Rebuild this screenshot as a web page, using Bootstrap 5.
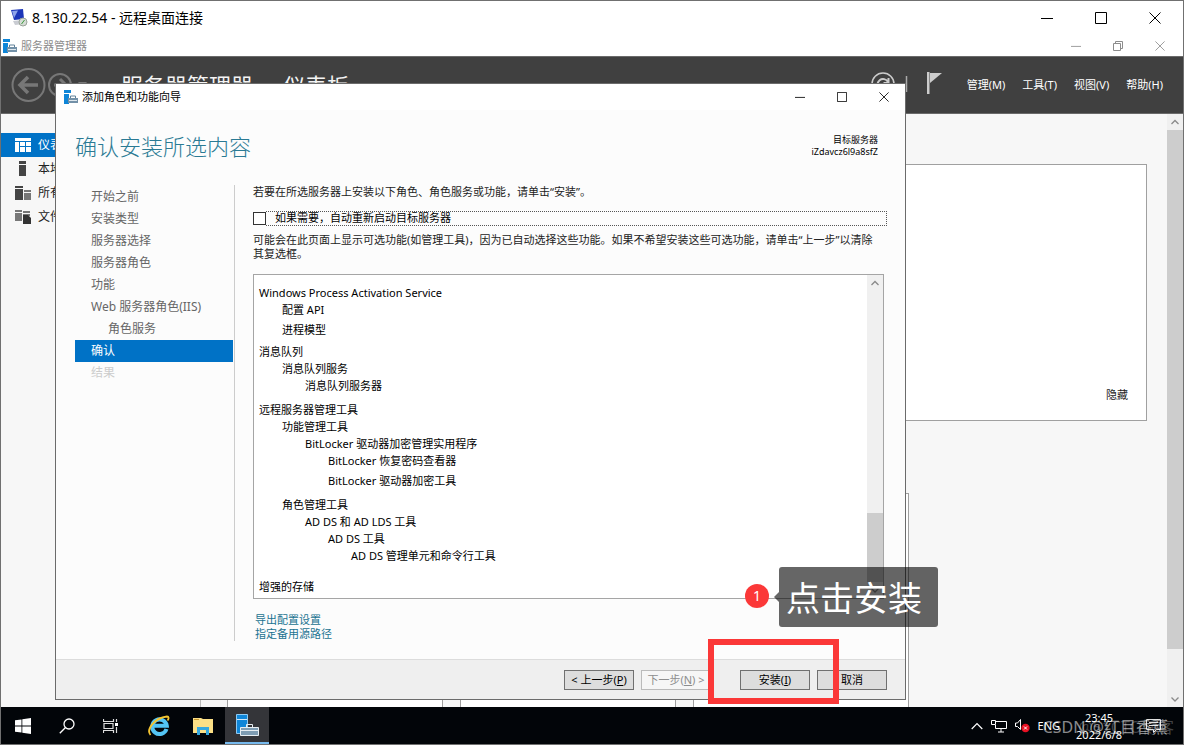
<!DOCTYPE html>
<html lang="zh-CN">
<head>
<meta charset="utf-8">
<meta name="viewport" content="width=device-width, initial-scale=1">
<title>8.130.22.54 - 远程桌面连接</title>
<link href="https://cdn.jsdelivr.net/npm/bootstrap@5.3.0/dist/css/bootstrap.min.css" rel="stylesheet">
<style>
body{font:11px/14px "Noto Sans","Noto Sans CJK SC",sans-serif;color:#222;background:#fff}
svg{display:block;flex:none}
button{font:inherit;color:inherit}
.ui-btn-plain{border:0;background:none;padding:0}
.shell{height:100vh;min-height:600px;border:1px solid #707070;overflow:hidden}
.rdp-bar{height:34px;padding:0 22px 0 9px;font-size:14px;color:#000}
.app-bar{height:21px;padding:0 18px 0 2px;color:#8c8c8c}
.win-btns{gap:32px}
.rdp-bar .win-btns{gap:42px}
.app-head{height:58px;background:#404040;border-top:1px solid #6a6a6a;border-bottom:1px solid #6a6a6a;color:#f4f4f4;padding:0 20px 0 10px}
.app-menu{gap:17px}
.app-title{font-size:22px;line-height:30px;margin-left:32px}
.side-list{width:200px;padding-top:19px;background:#f7f7f7;font-size:12px;border-right:1px solid #bbb}
.side-item{height:24px;padding-left:14px;gap:7px;color:#222;text-decoration:none}
.side-item.on{background:#0072c6;color:#fff}
.dash{background:#f7f7f7;padding:50px 20px 0 26px}
.tile-top{height:257px;background:#fff;border:1px solid #a0a0a0;padding:0 18px 18px}
.tile-row{gap:17px;margin-top:72px}
.tile{width:216px;background:#fff;border:1px solid #a0a0a0;border-bottom:0}
.sbar{width:16px;background:#f0f0f0}
.sbar-end{height:16px}
.sbar-thumb{background:#cdcdcd}
.wizard{left:54px;right:277px;top:82px;bottom:44px;background:#fcfcfc;border:1px solid #6b6b6b}
.wiz-bar{height:26px;background:#fff;padding:0 16px 0 8px;color:#000}
.wiz-head{height:75px;padding:0 27px 4px 19px}
.wiz-title{font-size:22px;line-height:30px;color:#2a7a94;font-weight:300;font-family:"Noto Sans","Noto Sans CJK SC Light","Noto Sans CJK SC",sans-serif}
.wiz-target{font-size:9px;line-height:12px;color:#000}
.wiz-body{padding:0 18px 18px 19px;min-height:0}
.wiz-nav{width:160px;padding:1px 1px 0 0;border-right:1px solid #ccc;font-size:12px}
.wiz-nav a{display:block;height:22px;line-height:22px;padding-left:16px;color:#666;text-decoration:none}
.wiz-nav a.sub{padding-left:33px}
.wiz-nav a.on{background:#0072c6;color:#fff}
.wiz-nav a.off{color:#ccc}
.wiz-main{padding-left:18px;min-width:0;min-height:0}
.wiz-main p{padding-right:6px}
.restart{margin:12px 0 7px}
.restart input{appearance:none;width:13px;height:13px;margin:0;border:1px solid #333;background:#fff;flex:none;border-radius:0}
.restart label{border:1px dotted #555;border-left:0;height:15px;line-height:12px;padding-left:9px;color:#000}
.feature-box{margin:13px 3px 14px 0;border:1px solid #a5a5a5;background:#fff;min-height:0;overflow:hidden}
.tree{padding:9px 0 0 5px;line-height:17px;color:#000}
.tree,.tree ul{list-style:none;margin:0}
.tree ul{padding:0 0 0 23px}
.tree li{padding-bottom:3px}
.tree li.group{padding-bottom:2px}
.tree ul ul ul ul{padding-bottom:3px}
.src-links{padding-left:2px}
.src-links a{color:#1a7391;text-decoration:none;display:block}
.wiz-foot{height:40px;background:#efefef;border-top:1px solid #dcdcdc;padding-right:18px;gap:7px}
.wbtn{width:70px;height:20px;border:1px solid #707070;background:#ddd;color:#000;padding:0;line-height:16px;white-space:nowrap}
.wbtn:disabled{border-color:#bbb;background:#f6f6f6;color:#8d8d8d}
.wbtn.gap-before{margin-left:22px}
.taskbar{height:37px;background:#020509;color:#fff;padding-right:22px}
.task{width:44px;height:37px;display:flex;align-items:center;justify-content:center;color:#fff}
.task.on{background:#343539;border-bottom:2px solid #76b9ed}
.clock{font-size:11px;line-height:17px;text-align:center}
.mark-frame{right:344px;bottom:40px;width:131px;height:65px;border:6px solid #fb3838}
.mark-num{right:414px;bottom:136px;width:24px;height:24px;border-radius:50%;background:#fb3838;color:#fff;font-size:14px;line-height:24px;text-align:center}
.mark-tip{right:245px;bottom:117px;height:60px;padding:0 16px 0 7px;border-radius:3px;background:rgba(0,0,0,.6);color:#fff;font-size:34px;line-height:62px;white-space:nowrap}
.mark-tip::before{content:"";position:absolute;left:-5px;top:25px;border:5px solid transparent;border-left:0;border-right-color:rgba(0,0,0,.6)}
.wm{bottom:6px;font-size:16px;line-height:22px;white-space:nowrap;pointer-events:none}
.wm-a{right:15px;color:rgba(255,255,255,.55)}
.wm-b{right:9px;color:rgba(255,255,255,.25)}
</style>
</head>
<body>
<svg width="0" height="0" class="position-absolute">
<defs>
<symbol id="srv" viewBox="0 0 24 24"><path d="M1 1h12v22H1z" fill="#0f86d8"/><path d="M1 5h12" stroke="#8fcaf2" stroke-width="1.5"/><path d="M6 13h18v10H6z" fill="#fff"/><path d="M7 14h16v8H7z" fill="#7f9db3"/><path d="M12 14v-3h6v3" fill="none" stroke="#5f8098" stroke-width="1.6"/><path d="M7 17h16" stroke="#fff"/></symbol>
<symbol id="tool" viewBox="0 0 14 14"><path d="M0 0h7v3H0zM0 4h5v10H0z" fill="#0f86d8"/><path d="M4 8h10v5H4z" fill="#7391a8"/><path d="M6.500 8V6h5v2" fill="none" stroke="#5f8098"/><path d="M5 10.500h8" stroke="#dfe8ee"/></symbol>
<symbol id="min" viewBox="0 0 12 12"><path d="M0 6.5h12" stroke="currentColor"/></symbol>
<symbol id="max" viewBox="0 0 12 12"><path d="M.5.5h11v11H.5z" fill="none" stroke="currentColor"/></symbol>
<symbol id="cls" viewBox="0 0 12 12"><path d="M.5.5l11 11M11.5.5l-11 11" fill="none" stroke="currentColor"/></symbol>
<symbol id="up" viewBox="0 0 16 16"><path d="M4.500 10L8 6.500 11.500 10" fill="none" stroke="#8a8a8a" stroke-width="1.300"/></symbol>
<symbol id="down" viewBox="0 0 16 16"><path d="M4.500 6.500L8 10l3.500-3.500" fill="none" stroke="#8a8a8a" stroke-width="1.300"/></symbol>
</defs>
</svg>
<div class="shell position-relative d-flex flex-column">
  <header class="rdp-bar d-flex align-items-center">
    <svg width="18" height="18" viewBox="0 0 18 18"><path d="M1 1l12-1 1 10-10 1z" fill="#1c35b8"/><path d="M2 2l6-.5L4 9z" fill="#8ea3ea"/><path d="M3 12l9-1 2 4-9 1z" fill="#c9ccd2"/><circle cx="13" cy="13" r="4" fill="#d5dcd5" stroke="#9aa39a"/><path d="M11.500 15l3-4" stroke="#3c9b3c" fill="none"/></svg>
    <span class="ms-1 me-auto">8.130.22.54 - 远程桌面连接</span>
    <div class="win-btns d-flex align-items-center">
      <button class="ui-btn-plain" aria-label="最小化"><svg width="12" height="12"><use href="#min"/></svg></button>
      <button class="ui-btn-plain" aria-label="最大化"><svg width="12" height="12"><use href="#max"/></svg></button>
      <button class="ui-btn-plain" aria-label="关闭"><svg width="12" height="12"><use href="#cls"/></svg></button>
    </div>
  </header>
  <div class="app-bar d-flex align-items-center">
    <svg width="14" height="14"><use href="#tool"/></svg>
    <span class="ms-1 me-auto">服务器管理器</span>
    <div class="win-btns d-flex align-items-center">
      <button class="ui-btn-plain" aria-label="最小化"><svg width="10" height="10"><use href="#min"/></svg></button>
      <button class="ui-btn-plain" aria-label="还原"><svg width="10" height="10" viewBox="0 0 10 10"><path d="M.5 2.500h7v7h-7zM2.500 2.500v-2h7v7h-2" fill="none" stroke="currentColor"/></svg></button>
      <button class="ui-btn-plain" aria-label="关闭"><svg width="10" height="10"><use href="#cls"/></svg></button>
    </div>
  </div>
  <div class="app-head d-flex align-items-center">
    <svg width="78" height="36" viewBox="0 0 78 36" fill="none" stroke="#777"><circle cx="17.500" cy="18" r="16" stroke-width="2"/><path d="M27 18H10M17 10l-8 8 8 8" stroke-width="3.500"/><circle cx="49" cy="18" r="11" stroke-width="2"/><path d="M43 18h11M49 12l6 6-6 6" stroke-width="3"/><path d="M67 15h9l-4.500 5z" fill="#777" stroke="none"/></svg>
    <span class="app-title me-auto">服务器管理器<span class="mx-2 px-1">·</span>仪表板</span>
    <svg class="me-4" width="72" height="26" viewBox="0 0 72 26"><circle cx="12" cy="12" r="11" fill="none" stroke="#ccc" stroke-width="1.500"/><path d="M17 10a5.500 5.500 0 1 0 0 5M17.500 6v5h-5" fill="none" stroke="#ccc" stroke-width="2"/><path d="M35.500 4v16" stroke="#aaa" stroke-width="1.500"/><path d="M56 0h2.500v22H56z" fill="#ccc"/><path d="M59 1h12L59 11z" fill="#ccc"/></svg>
    <nav class="app-menu d-flex text-white">
      <button class="ui-btn-plain">管理(M)</button><button class="ui-btn-plain">工具(T)</button><button class="ui-btn-plain">视图(V)</button><button class="ui-btn-plain">帮助(H)</button>
    </nav>
  </div>
  <div class="d-flex flex-grow-1" style="min-height:0">
    <nav class="side-list">
      <a href="#" class="side-item on d-flex align-items-center"><svg width="16" height="14" viewBox="0 0 16 14" fill="#fff"><path d="M0 0h16v3H0zM0 4h4v10H0zM5 4h5v4H5zM11 4h5v4h-5zM5 9h5v5H5zM11 9h5v5h-5z"/></svg>仪表</a>
      <a href="#" class="side-item d-flex align-items-center"><svg width="16" height="16" viewBox="0 0 16 16" fill="#444"><path d="M4 0h7v3H4zM4 4h7v11H4z"/></svg>本地</a>
      <a href="#" class="side-item d-flex align-items-center"><svg width="16" height="16" viewBox="0 0 16 16" fill="#444"><path d="M0 1h8v2H0zM0 4h8v11H0z"/><path d="M9 5h7v2H9zM9 8h7v7H9z" fill="#777"/></svg>所有</a>
      <a href="#" class="side-item d-flex align-items-center"><svg width="16" height="16" viewBox="0 0 16 16" fill="#777"><path d="M0 1h7v2H0zM0 4h7v8H0zM8 2h7v2H8zM8 5h7v2H8z"/><path d="M8 6h5l3 3v6H8z" fill="#333"/></svg>文件</a>
    </nav>
    <main class="dash flex-grow-1 d-flex flex-column">
      <section class="tile-top d-flex align-items-end justify-content-end"><button class="ui-btn-plain">隐藏</button></section>
      <div class="tile-row d-flex flex-grow-1"><div class="tile"></div><div class="tile"></div><div class="tile"></div></div>
    </main>
    <div class="sbar d-flex flex-column">
      <svg class="sbar-end" width="16"><use href="#up"/></svg>
      <div class="sbar-thumb" style="flex:519"></div><div style="flex:42"></div>
      <svg class="sbar-end" width="16"><use href="#down"/></svg>
    </div>
  </div>
  <footer class="taskbar d-flex align-items-center">
    <button class="ui-btn-plain task" aria-label="开始"><svg width="16" height="16" viewBox="0 0 16 16" fill="#fff"><path d="M0 2.300L6.500 1.400v6.200H0zM7.300 1.300L16 0v7.600H7.300zM0 8.400h6.500v6.200L0 13.700zM7.300 8.400H16V16l-8.700-1.300z"/></svg></button>
    <button class="ui-btn-plain task" aria-label="搜索"><svg width="16" height="16" viewBox="0 0 16 16" fill="none" stroke="#fff" stroke-width="1.300"><circle cx="10" cy="6" r="5"/><path d="M6.500 9.500L.8 15.200"/></svg></button>
    <button class="ui-btn-plain task" aria-label="任务视图"><svg width="16" height="16" viewBox="0 0 16 16" fill="none" stroke="#ddd"><path d="M1 5.500h9v5H1zM.5 1v2.500h10V1M.5 15v-2.500h10V15M13.500 1v3M13.500 9v6" stroke-width="1.200"/><path d="M12 5h3v3h-3z" fill="#fff" stroke="none"/></svg></button>
    <button class="ui-btn-plain task ms-1" aria-label="Internet Explorer"><svg width="22" height="22" viewBox="0 0 22 22" fill="none"><path d="M18.500 14a7.300 7.300 0 1 1 .3-3.200H6" stroke="#53c5f5" stroke-width="4"/><path d="M2.500 20C-2 15 6 3 19 1.500c2 0 2 2 .5 4" stroke="#f4c430" stroke-width="1.800"/></svg></button>
    <button class="ui-btn-plain task" aria-label="文件资源管理器"><svg width="20" height="18" viewBox="0 0 20 18"><path d="M0 1h8l2 1h10v14H0z" fill="#fbdf86"/><path d="M1 2h5v1H1z" fill="#c99a2e"/><path d="M4 18V10h12v8h-3v-5H7v5z" fill="#35a8e0"/></svg></button>
    <button class="ui-btn-plain task on" aria-label="服务器管理器"><svg width="24" height="24" viewBox="0 0 24 24"><path d="M1.500 1.500h11v19h-11z" fill="#0f86d8" stroke="#8fcaf2"/><path d="M2 6.500h10" stroke="#cfe8fa"/><path d="M5.500 14.500h18v8h-18z" fill="#7f9db3" stroke="#e8eef2"/><path d="M11.500 14v-2.500h6V14M6 17.500h17" fill="none" stroke="#e8eef2"/></svg></button>
    <div class="ms-auto d-flex align-items-center">
      <svg width="12" height="8" viewBox="0 0 12 8"><path d="M.7 7L6 1.500 11.300 7" fill="none" stroke="#fff" stroke-width="1.200"/></svg>
      <svg class="ms-2" width="16" height="14" viewBox="0 0 16 14" fill="none" stroke="#fff"><path d="M5 2.500h10.500v7H4.500V6M10 10v3M7 13h6M.5 1.500h4v4h-4z"/></svg>
      <svg class="ms-2" width="15" height="15" viewBox="0 0 15 15" fill="none"><path d="M.5 5h2l3-3.500v10L2.500 8.500h-2z" stroke="#fff"/><circle cx="10.500" cy="10" r="4.200" fill="#e81123"/><path d="M9 8.500l3 3M12 8.500l-3 3" stroke="#fff"/></svg>
      <span class="ms-2">ENG</span>
      <div class="clock ms-3"><div>23:45</div><div>2022/6/8</div></div>
      <svg class="ms-4" width="15" height="16" viewBox="0 0 15 16" fill="none" stroke="#ddd"><path d="M.5 1.500h14v10h-4l-3 3v-3h-7zM3 4.500h9M3 7.500h9"/></svg>
    </div>
  </footer>

  <section class="wizard position-absolute d-flex flex-column">
    <div class="wiz-bar d-flex align-items-center">
      <svg width="14" height="14"><use href="#tool"/></svg>
      <span class="ms-1 me-auto">添加角色和功能向导</span>
      <div class="win-btns d-flex align-items-center">
        <button class="ui-btn-plain" aria-label="最小化"><svg width="10" height="10"><use href="#min"/></svg></button>
        <button class="ui-btn-plain" aria-label="最大化"><svg width="10" height="10"><use href="#max"/></svg></button>
        <button class="ui-btn-plain" aria-label="关闭"><svg width="10" height="10"><use href="#cls"/></svg></button>
      </div>
    </div>
    <div class="wiz-head d-flex align-items-center justify-content-between">
      <h1 class="wiz-title m-0">确认安装所选内容</h1>
      <div class="wiz-target text-end">目标服务器<br>iZdavcz6l9a8sfZ</div>
    </div>
    <div class="wiz-body d-flex flex-grow-1">
      <nav class="wiz-nav flex-shrink-0">
        <a href="#">开始之前</a><a href="#">安装类型</a><a href="#">服务器选择</a><a href="#">服务器角色</a><a href="#">功能</a><a href="#">Web 服务器角色(IIS)</a><a href="#" class="sub">角色服务</a><a href="#" class="on">确认</a><a href="#" class="off">结果</a>
      </nav>
      <div class="wiz-main flex-grow-1 d-flex flex-column">
        <p class="m-0">若要在所选服务器上安装以下角色、角色服务或功能，请单击“安装”。</p>
        <div class="restart d-flex align-items-center"><input type="checkbox" id="auto"><label for="auto" class="flex-grow-1">如果需要，自动重新启动目标服务器</label></div>
        <p class="m-0">可能会在此页面上显示可选功能(如管理工具)，因为已自动选择这些功能。如果不希望安装这些可选功能，请单击“上一步”以清除其复选框。</p>
        <div class="feature-box d-flex flex-grow-1">
          <ul class="tree flex-grow-1">
            <li class="group">Windows Process Activation Service<ul><li>配置 API</li><li>进程模型</li></ul></li>
            <li class="group">消息队列<ul><li class="group">消息队列服务<ul><li>消息队列服务器</li></ul></li></ul></li>
            <li class="group">远程服务器管理工具<ul>
              <li class="group">功能管理工具<ul><li class="group">BitLocker 驱动器加密管理实用程序<ul><li>BitLocker 恢复密码查看器</li><li>BitLocker 驱动器加密工具</li></ul></li></ul></li>
              <li class="group">角色管理工具<ul><li class="group">AD DS 和 AD LDS 工具<ul><li class="group">AD DS 工具<ul><li>AD DS 管理单元和命令行工具</li></ul></li></ul></li></ul></li>
            </ul></li>
            <li>增强的存储</li>
          </ul>
          <div class="sbar d-flex flex-column flex-shrink-0">
            <svg class="sbar-end" width="16"><use href="#up"/></svg>
            <div style="flex:222"></div><div class="sbar-thumb" style="flex:69"></div>
            <svg class="sbar-end" width="16"><use href="#down"/></svg>
          </div>
        </div>
        <div class="src-links"><a href="#">导出配置设置</a><a href="#">指定备用源路径</a></div>
      </div>
    </div>
    <div class="wiz-foot d-flex align-items-center justify-content-end">
      <button class="wbtn">&lt; 上一步(<u>P</u>)</button>
      <button class="wbtn" disabled>下一步(<u>N</u>) &gt;</button>
      <button class="wbtn gap-before">安装(<u>I</u>)</button>
      <button class="wbtn">取消</button>
    </div>
  </section>

  <div class="mark-frame position-absolute"></div>
  <div class="mark-num position-absolute">1</div>
  <div class="mark-tip position-absolute">点击安装</div>
  <div class="wm wm-b position-absolute">@51CTO博客</div>
  <div class="wm wm-a position-absolute">CSDN @红目香薰</div>
</div>
<script src="https://cdn.jsdelivr.net/npm/bootstrap@5.3.0/dist/js/bootstrap.bundle.min.js"></script>
</body>
</html>
